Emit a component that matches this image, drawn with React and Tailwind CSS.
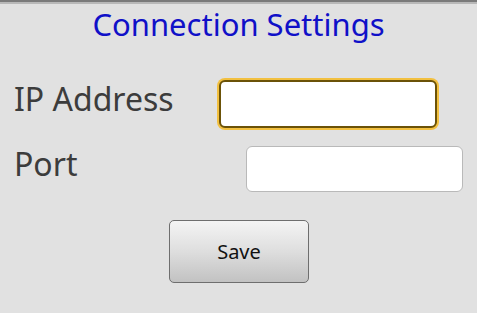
import React from 'react';

const App = () => {
  return (
    <div
      className="w-[477px] h-[313px] overflow-hidden bg-[#e1e1e1] flex flex-col"
      style={{ fontFamily: '"Noto Sans", "Open Sans", sans-serif' }}
    >
      {/* status bar edge */}
      <div className="h-[2px] bg-[#7a7a7a]" />
      <div className="h-[2px] bg-[#b8b8b8]" />

      <h1 className="text-center text-[31px] leading-[38px] text-[#1010c8] mt-[1px]">
        Connection Settings
      </h1>

      <div className="flex items-center mt-[37px] pl-[14px]">
        <label className="text-[32px] leading-[34px] text-[#3c3c3c] w-[205px] mb-[10px]">IP Address</label>
        <input
          type="text"
          className="w-[218px] h-[48px] rounded-[6px] bg-white border-[2px] border-[#6b5208] ring-[2px] ring-[#f2c040] outline-none"
        />
      </div>

      <div className="flex items-center mt-[18px] pl-[14px]">
        <label className="text-[32px] leading-[34px] text-[#3c3c3c] w-[232px] mb-[10px]">Port</label>
        <input
          type="text"
          className="w-[217px] h-[46px] rounded-[6px] bg-white border border-[#b9b9b9] outline-none"
        />
      </div>

      <div className="flex mt-[28px] pl-[169px]">
        <button className="w-[140px] h-[63px] rounded-[5px] border border-[#6e6e6e] bg-gradient-to-b from-[#f4f4f4] via-[#dedede] to-[#c2c2c2] text-[20px] text-[#111]">
          Save
        </button>
      </div>
    </div>
  );
};

export default App;
